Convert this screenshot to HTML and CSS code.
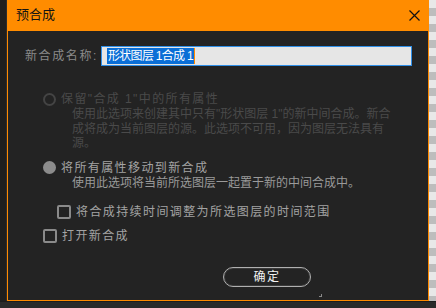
FILE: index.html
```html
<!DOCTYPE html>
<html lang="zh">
<head>
<meta charset="utf-8">
<link rel="stylesheet" href="styles.css">
</head>
<body>
<div class="screen">
  <div class="main">
    <div class="left-strip"></div>
    <div class="dialog">
      <div class="titlebar">
        <span class="title">预合成</span>
        <svg class="close" width="11" height="11" viewBox="0 0 11 11"><path d="M0.5 0.5 L10.5 10.5 M10.5 0.5 L0.5 10.5" stroke="#111" stroke-width="1.2" fill="none"/></svg>
      </div>
      <div class="content">
        <div class="name-row">
          <span class="name-label">新合成名称:</span>
          <div class="input"><span class="sel">形状图层 1合成 1</span><span class="caret"></span></div>
        </div>
        <div class="option disabled first">
          <span class="radio"></span>
          <span class="opt-label">保留"合成 1"中的所有属性</span>
        </div>
        <div class="desc disabled">
          <div class="line">使用此选项来创建其中只有"形状图层 1"的新中间合成。新合</div>
          <div class="line">成将成为当前图层的源。此选项不可用，因为图层无法具有</div>
          <div class="line">源。</div>
        </div>
        <div class="option second">
          <span class="radio checked"></span>
          <span class="opt-label">将所有属性移动到新合成</span>
        </div>
        <div class="desc">
          <div class="line">使用此选项将当前所选图层一起置于新的中间合成中。</div>
        </div>
        <div class="option check1">
          <span class="box"></span>
          <span class="opt-label">将合成持续时间调整为所选图层的时间范围</span>
        </div>
        <div class="option check2">
          <span class="box"></span>
          <span class="opt-label">打开新合成</span>
        </div>
        <div class="btn-row">
          <div class="btn">确定</div>
        </div>
        <div class="grip-row"><span class="grip"></span></div>
      </div>
    </div>
    <div class="checker"></div>
  </div>
  <div class="bottom-strip"></div>
</div>
</body>
</html>
```
FILE: styles.css
```css
* { box-sizing: border-box; }
html, body { margin: 0; padding: 0; }
body {
  width: 436px;
  height: 308px;
  overflow: hidden;
  background: #202020;
  font-family: "Liberation Sans", "Noto Sans CJK SC", sans-serif;
  font-size: 12px;
}
.screen { display: flex; flex-direction: column; height: 308px; }
.main { display: flex; height: 301px; }
.left-strip {
  width: 7px;
  background: #1e1e1e;
  border-right: 1px solid #2c2c2c;
}
.dialog {
  width: 422px;
  display: flex;
  flex-direction: column;
  background: #232323;
  border: 1px solid #ff8a00;
  border-top: none;
}
.titlebar {
  height: 31px;
  background: #ff8c00;
  display: flex;
  align-items: center;
  justify-content: space-between;
  padding: 0 9px 0 8px;
  margin: 0 -1px;
}
.title {
  font-size: 13px;
  color: #141414;
  line-height: 16px;
  margin-top: -1px;
  padding-left: 1px;
}
.close { display: block; margin-top: -1px; }
.content {
  flex: 1;
  display: flex;
  flex-direction: column;
  padding-left: 17px;
}
.name-row {
  display: flex;
  align-items: center;
  height: 20px;
  margin-top: 15px;
}
.name-label {
  color: #8a8a8a;
  letter-spacing: 1.6px;
  width: 76px;
  line-height: 14px;
}
.input {
  width: 311px;
  height: 20px;
  background: #e6e6e6;
  border: 1px solid #2f8fe8;
  display: flex;
  align-items: stretch;
  padding: 1px 0 1px 5px;
}
.sel {
  background: #0a6ed6;
  color: #ffffff;
  line-height: 16px;
  padding: 0 1px;
  white-space: nowrap;
  letter-spacing: -0.7px;
}
.caret { width: 1px; background: #ff8a00; }
.option {
  display: flex;
  align-items: center;
  height: 16px;
  padding-left: 18px;
  color: #a3a3a3;
}
.opt-label { letter-spacing: 1.4px; line-height: 16px; white-space: nowrap; }
.option.first { margin-top: 25px; }
.option.second { margin-top: 9px; }
.option.check1 { margin-top: 14px; padding-left: 32px; }
.option.check2 { margin-top: 8px; }
.radio {
  width: 13px;
  height: 13px;
  border-radius: 50%;
  border: 2px solid #8a8a8a;
  margin-right: 5px;
  flex: none;
}
.radio.checked { background: #8c8c8c; border-color: #8c8c8c; }
.option.disabled { color: #4a4a4a; }
.option.disabled .radio { border-color: #444444; }
.box {
  width: 14px;
  height: 14px;
  border: 2px solid #8a8a8a;
  border-radius: 2px;
  margin-right: 5px;
  flex: none;
}
.desc {
  padding-left: 47px;
  color: #9a9a9a;
  white-space: nowrap;
  display: flex;
  flex-direction: column;
}
.line { line-height: 14.5px; height: 14.5px; }
.desc.disabled { color: #4a4a4a; }
.btn-row { margin-top: 23px; padding-left: 198px; }
.btn {
  width: 88px;
  height: 20px;
  border: 1px solid #b0b0b0;
  border-radius: 10px;
  color: #f2f2f2;
  text-align: center;
  line-height: 18px;
  font-size: 12px;
  letter-spacing: 1.5px;
  box-shadow: inset 0 0 0 1px #3a3a3a;
}
.grip-row { padding-left: 294px; margin-top: 7px; }
.grip {
  display: block;
  width: 3px;
  height: 3px;
  border-right: 1px solid #888;
  border-bottom: 1px solid #888;
}
.checker {
  flex: 1;
  background-color: #e6e6e6;
  background-image: conic-gradient(#bdbdbd 25%, #e8e8e8 0 50%, #bdbdbd 0 75%, #e8e8e8 0);
  background-size: 14px 16px;
}
.bottom-strip {
  flex: 1;
  background: #2a2a2a;
  border-top: 1px solid #1c1c1c;
}
```
